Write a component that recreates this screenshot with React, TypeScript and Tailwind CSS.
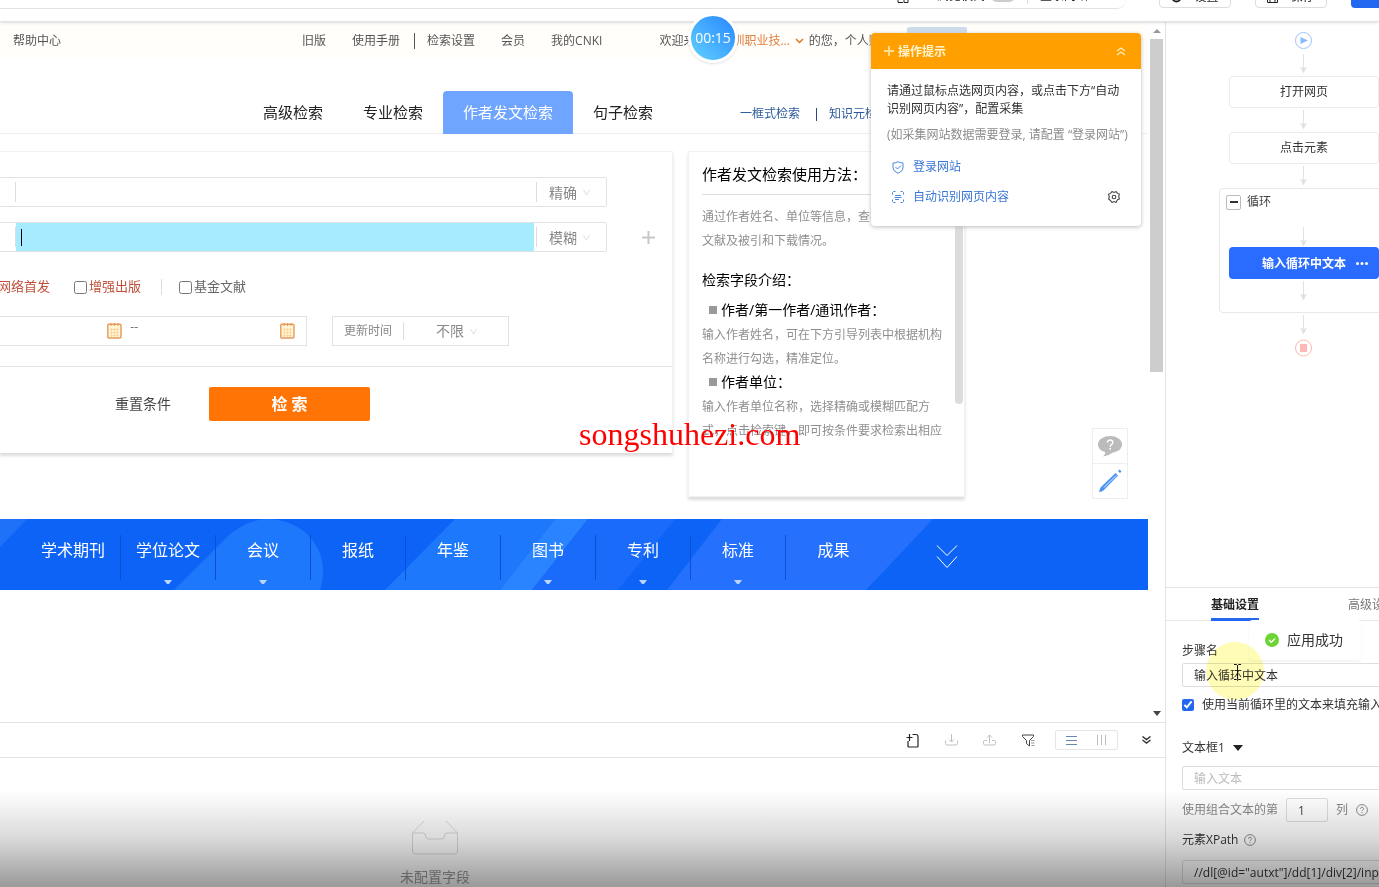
import { useState } from "react";

const FONT = "font-['Open_Sans','Noto_Sans_CJK_SC',sans-serif]";

const categories = [
    { name: "学术期刊", more: false },
    { name: "学位论文", more: true },
    { name: "会议", more: true },
    { name: "报纸", more: false },
    { name: "年鉴", more: false },
    { name: "图书", more: true },
    { name: "专利", more: true },
    { name: "标准", more: true },
    { name: "成果", more: false },
];

const tabs = ["高级检索", "专业检索", "作者发文检索", "句子检索"];

function ChevronSmall() {
    return (
        <svg width="7" height="7" viewBox="0 0 8 8" fill="none" stroke="#d8d8d8" className="pointer-events-none shrink-0">
            <path d="M.5 1 4 7 7.5 1" />
        </svg>
    );
}

function CalendarIcon() {
    return (
        <svg width="15" height="16" viewBox="0 0 15 16" fill="none" className="shrink-0">
            <rect x=".8" y="1.2" width="13.2" height="13.8" rx="1" fill="#fff4d4" stroke="#e89a58" strokeWidth="1.4" />
            <path d="M4 0v3M7.500 0v3M11 0v3" stroke="#e89a58" />
            <path d="M3 6.500h9M3 9.500h9M3 12.500h9M4.500 5v9M7.500 5v9M10.500 5v9" stroke="#fbd9a4" />
        </svg>
    );
}

function HelpIcon() {
    return (
        <svg width="12" height="12" viewBox="0 0 12 12" fill="none" stroke="#8c8c8c" className="shrink-0">
            <circle cx="6" cy="6" r="5.4" />
            <path d="M4.400 4.800c0-2.200 3.300-2 3.200 0 0 1.100-1.600 1.100-1.600 2.300M6 8.200v1" />
        </svg>
    );
}

function Arrow() {
    return (
        <svg width="8" height="20" viewBox="0 0 8 20" className="shrink-0">
            <path d="M3.500 0v14" stroke="#e2e2e2" />
            <path d="M.3 13 3.500 14l3.200-1L3.500 19.500Z" fill="#e0e0e0" />
        </svg>
    );
}

function TopToolbar() {
    return (
        <header className="relative z-10 flex h-[22px] shrink-0 items-start justify-between overflow-hidden border-b border-[#e2e3e5] bg-white text-xs text-[#222] shadow-sm">
            <div className="flex h-[9px] w-[1126px] shrink-0 items-end justify-end overflow-hidden rounded-br-2xl border-b border-[#e2e3e5] pr-[18px]">
                <svg width="12" height="12" viewBox="0 0 12 12" fill="none" stroke="#222" className="mr-7 mb-1 shrink-0">
                    <path d="M1 1v9.500h5M6 5h5v5.500H7V5" />
                </svg>
                <div className="mb-1 flex h-4 items-center">
                    <label htmlFor="browse">浏览模式</label>
                    <input id="browse" type="checkbox" className="ml-1.5 h-3 w-6 appearance-none rounded-full bg-[#ccc]" />
                    <span className="ml-3 h-4 w-px bg-[#ddd]" />
                    <button className="ml-3">登录网站</button>
                    <span className="ml-2 text-[#aaa]">∨</span>
                </div>
            </div>
            <div className="flex h-2 shrink-0 items-end gap-6">
                <button className="flex h-[22px] w-[72px] items-center justify-center gap-3 rounded border border-[#dcdde0]">
                    <svg width="11" height="11" viewBox="0 0 11 11" fill="none" stroke="#222" strokeWidth="2"><circle cx="5.500" cy="5.500" r="4" /></svg>设置
                </button>
                <button className="flex h-[22px] w-[72px] items-center justify-center gap-3 rounded border border-[#dcdde0]">
                    <svg width="11" height="11" viewBox="0 0 11 11" fill="none" stroke="#222"><path d="M.5.5h10v10H.5ZM3 10V6h5v4" /></svg>保存
                </button>
                <button aria-label="采集" className="h-[22px] w-7 rounded-l bg-[#2468f2]" />
            </div>
        </header>
    );
}

function SiteNav() {
    return (
        <nav className="flex h-9 shrink-0 items-center overflow-hidden bg-[#fffefa] pt-0.5 text-xs whitespace-nowrap text-[#555]">
            <a href="#" className="ml-[13px]">帮助中心</a>
            <a href="#" className="ml-[241px]">旧版</a>
            <a href="#" className="ml-[26px]">使用手册</a>
            <span className="mr-3 ml-3.5 h-4 w-px bg-[#555]" />
            <a href="#">检索设置</a>
            <a href="#" className="ml-[26px]">会员</a>
            <a href="#" className="ml-[26px]">我的CNKI</a>
            <span className="ml-[57px] w-[61px]">欢迎来自</span>
            <a href="#" className="text-[#e08040]">深圳职业技...</a>
            <svg width="9" height="6" viewBox="0 0 9 6" fill="none" stroke="#e07820" strokeWidth="1.5" className="mx-[5px]">
                <path d="m1 1 3.500 3.500L8 1" />
            </svg>
            <span>的您，个人账户</span>
        </nav>
    );
}

function SearchTabs() {
    const [active, setActive] = useState(2);
    return (
        <div className="flex h-[76px] shrink-0 items-end border-b border-[#f0f0f0] bg-white pl-[243px] whitespace-nowrap">
            {tabs.map((tab, i) => (
                <button
                    key={tab}
                    onClick={() => setActive(i)}
                    className={`-mb-px h-[43px] shrink-0 rounded-t text-[15px] ${i === 2 ? "w-[130px]" : "w-[100px]"} ${active === i ? "bg-[#6fa5ff] text-white" : "text-[#222]"}`}
                >
                    {tab}
                </button>
            ))}
            <div className="-mb-px ml-[67px] flex h-10 items-center text-xs text-[#2a5a9a]">
                <a href="#">一框式检索</a>
                <span className="mr-3 ml-4 h-[13px] w-px bg-[#2a4a80]" />
                <a href="#">知识元检索</a>
            </div>
        </div>
    );
}

function FieldRow({ mode, active }: { mode: string; active?: boolean }) {
    return (
        <div className="flex items-center">
            <div className="flex h-[30px] w-[607px] items-center rounded-r-xs border border-l-0 border-[#e2e2e2]">
                <span className="mr-auto ml-[15px] h-5 w-px shrink-0 bg-[#ddd]" />
                <div className={`relative flex h-7 w-[518px] items-center ${active ? "bg-[#a6ebff]" : ""}`}>
                    <input aria-label={`作者${mode}`} className="h-full w-full bg-transparent px-1.5 text-sm outline-none" />
                    {active && <span className="absolute left-[5px] h-[17px] w-px bg-black" />}
                </div>
                <span className="ml-0.5 h-5 w-px bg-[#ddd]" />
                <div className="flex w-[69px] items-center pt-px pl-3">
                    <select aria-label="匹配方式" className="w-[34px] appearance-none text-sm leading-5 text-[#888] outline-none">
                        <option>{mode}</option>
                    </select>
                    <ChevronSmall />
                </div>
            </div>
            {active && (
                <button aria-label="添加" className="ml-[35px]">
                    <svg width="13" height="13" viewBox="0 0 13 13" stroke="#c8c8c8" strokeWidth="2">
                        <path d="M6.500 0v13M0 6.500h13" />
                    </svg>
                </button>
            )}
        </div>
    );
}

function SearchCard() {
    return (
        <section className="flex h-[302px] min-w-0 flex-1 flex-col overflow-hidden border-t border-r border-[#f2f2f2] bg-white pt-[25px] whitespace-nowrap shadow-[0_3px_3px_#ddd]">
            <div className="flex flex-col gap-[15px]">
                <FieldRow mode="精确" />
                <FieldRow mode="模糊" active />
            </div>
            <div className="mt-[25px] flex h-5 items-center text-[13px] text-[#c0503c]">
                <span className="-ml-0.5 w-[52px]">网络首发</span>
                <label className="ml-6 flex items-center gap-0.5">
                    <input type="checkbox" className="size-[13px]" />增强出版
                </label>
                <span className="ml-5 h-4 w-px bg-[#ddd]" />
                <label className="ml-[17px] flex items-center gap-0.5 text-[#666]">
                    <input type="checkbox" className="size-[13px]" />基金文献
                </label>
            </div>
            <div className="mt-[19px] flex h-[30px]">
                <div className="flex w-[307px] items-center border border-l-0 border-[#e2e2e2]">
                    <input aria-label="开始日期" className="mr-auto w-[100px] outline-none" />
                    <CalendarIcon />
                    <span className="ml-2 h-5 text-xs leading-3 text-[#666]">--</span>
                    <input aria-label="结束日期" className="w-[142px] outline-none" />
                    <span className="mr-[11px]"><CalendarIcon /></span>
                </div>
                <div className="ml-[25px] flex w-[177px] items-center border border-[#e2e2e2] text-[#888]">
                    <label htmlFor="updated" className="ml-[11px] text-xs">更新时间</label>
                    <span className="ml-[11px] h-[18px] w-px bg-[#ddd]" />
                    <select id="updated" className="ml-8 w-[34px] appearance-none text-sm leading-5 outline-none">
                        <option>不限</option>
                    </select>
                    <ChevronSmall />
                </div>
            </div>
            <div className="mt-5 flex items-center border-t border-[#e2e2e2] pt-5">
                <button className="ml-[115px] text-sm text-[#444]">重置条件</button>
                <button className="ml-[38px] h-[34px] w-[161px] rounded-xs bg-[#ff7404] text-base font-bold text-white">检 索</button>
            </div>
        </section>
    );
}

function HelpCard() {
    return (
        <section className="relative h-[346px] w-[277px] shrink-0 border border-[#f2f2f2] bg-white px-[13px] pt-1.5 text-black shadow-[0_3px_3px_#ddd]">
            <h2 className="border-b border-[#ddd] pb-1 text-[15px] leading-8 whitespace-nowrap">作者发文检索使用方法：</h2>
            <div className="w-[241px] pt-2.5 text-xs leading-6 text-[#8f8f8f]">
                <p>通过作者姓名、单位等信息，查找作者发表的文献及被引和下载情况。</p>
                <h3 className="mt-[15px] text-sm leading-6 text-black">检索字段介绍：</h3>
                <h4 className="mt-1.5 flex items-center gap-1 pl-[7px] text-sm leading-6 text-black">
                    <span className="size-2 bg-[#999]" />作者/第一作者/通讯作者：
                </h4>
                <p className="pt-px">输入作者姓名，可在下方引导列表中根据机构名称进行勾选，精准定位。</p>
                <h4 className="-mt-px flex items-center gap-1 pl-[7px] text-sm leading-6 text-black">
                    <span className="size-2 bg-[#999]" />作者单位：
                </h4>
                <p className="pt-px">输入作者单位名称，选择精确或模糊匹配方式，点击检索键，即可按条件要求检索出相应</p>
            </div>
            <span className="absolute top-12 right-px h-[204px] w-2 rounded-full bg-[#dcdcdc]" />
        </section>
    );
}

function CategoryBar() {
    return (
        <div className="relative mt-[22px] h-[71px] shrink-0 overflow-hidden bg-[#0d63f6]">
            <svg width="1148" height="71" viewBox="0 0 1148 71" className="absolute inset-0">
                <path d="M0 0h27L0 28Z" fill="#1f72f8" />
                <path d="M174 71 228 17Q248 0 267 0C300 0 323 24 323 52Q323 63 320 71Z" fill="#1d78fc" />
                <path d="M385 71 455 0H555L500 71Z" fill="#1d78fc" />
                <path d="M500 71 555 0h33L532 71Z" fill="#2b84ff" />
                <path d="M532 71 588 0h87L618 71Z" fill="#1b6bfa" />
                <path d="M667 71 722 0H933L789 71Z" fill="#2571fd" />
                <path d="M712 71 780 0h153L866 71Z" fill="#2571fd" />
            </svg>
            <ul className="relative flex h-full pl-[26px] text-base text-white">
                {categories.map((c) => (
                    <li key={c.name} className="flex w-[95px] shrink-0">
                        <a href="#" className="flex h-full flex-1 flex-col items-center pt-[19px]">
                            <span className="leading-6">{c.name}</span>
                            {c.more && <svg width="8" height="4" viewBox="0 0 8 4" className="mt-[18px]"><path d="M0 0h8L5 4H3Z" fill="#b8d4ff" /></svg>}
                        </a>
                        {c.name !== "成果" && <span className="mt-4 h-[45px] w-px bg-[#0850d4]" />}
                    </li>
                ))}
                <li className="ml-[55px] pt-[26px]">
                    <button aria-label="展开">
                        <svg width="22" height="24" viewBox="0 0 22 24" fill="none" stroke="#fff">
                            <path d="m1 .5 10 10 10-10M1 11.500l10 11 10-11" />
                        </svg>
                    </button>
                </li>
            </ul>
        </div>
    );
}

function TipPanel() {
    return (
        <aside className="absolute top-[11px] right-[24px] w-[270px] rounded-sm bg-white text-xs shadow-[0_1px_4px_#bbb]">
            <div className="flex h-9 items-center rounded-t-sm bg-[#ffa000] px-[13px] text-[#fff3d0]">
                <svg width="10" height="10" viewBox="0 0 10 10" stroke="#ffdc90" strokeWidth="2">
                    <path d="M5 0v10M0 5h10" />
                </svg>
                <h2 className="ml-1 pt-0.5 font-bold">操作提示</h2>
                <button aria-label="收起" className="ml-auto p-0.5">
                    <svg width="10" height="9" viewBox="0 0 10 9" fill="none" stroke="#ffeec0" strokeWidth="1.2">
                        <path d="m1 4 4-3 4 3M1 8l4-3 4 3" />
                    </svg>
                </button>
            </div>
            <div className="h-[157px] px-4 pt-[13px]">
                <p className="leading-[18px] whitespace-nowrap text-[#333]">请通过鼠标点选网页内容，或点击下方“自动<br />识别网页内容”，配置采集</p>
                <p className="mt-2 leading-[18px] whitespace-nowrap text-[#8c8c8c]">(如采集网站数据需要登录, 请配置 “登录网站”)</p>
                <button className="mt-3.5 ml-[5px] flex h-[18px] items-center gap-[9px] text-[#3a76d8]">
                    <svg width="12" height="13" viewBox="0 0 12 13" fill="none" stroke="#4a88e0">
                        <path d="M6 .7Q8 2 11 2v5q0 3-5 5.300Q1 10 1 7V2Q4 2 6 .7ZM3.500 6l2 2 3.500-3.500" />
                    </svg>
                    登录网站
                </button>
                <div className="mt-3 ml-[5px] flex h-[18px] items-center justify-between pr-[5px]">
                    <button className="flex items-center gap-[9px] text-[#3a76d8]">
                        <svg width="12" height="12" viewBox="0 0 12 12" fill="none" stroke="#4a88e0">
                            <path d="M.5 3.500v-2l1-1h2M8.500.5h2l1 1v2M.5 8.500v2l1 1h2M8.500 11.500h2l1-1v-2" />
                            <path d="M3 4.500h6M2.500 6.500h7M3 8.500h4" />
                        </svg>
                        自动识别网页内容
                    </button>
                    <button aria-label="设置">
                        <svg width="12" height="12" viewBox="0 0 12 12" fill="none" stroke="#444" strokeWidth="1.1">
                            <path d="m4 .6 2 .8 2-.8 1.500 1.800 1.900.7-.7 2 .7 2.900-1.900.8L8 11.400l-2-.8-2 .8-1.500-1.800L.6 8l.7-2-.7-2.900 1.900-.7Z" />
                            <circle cx="6" cy="6" r="1.800" />
                        </svg>
                    </button>
                </div>
            </div>
        </aside>
    );
}

function FloatTools() {
    return (
        <div className="absolute top-[406px] right-[37px] flex w-9 flex-col divide-y divide-[#eee] border border-[#eee] bg-white">
            <button aria-label="帮助" className="flex h-[35px] items-center justify-center">
                <svg width="24" height="21" viewBox="0 0 24 21">
                    <ellipse cx="12" cy="8.500" rx="12" ry="8.500" fill="#bbb" />
                    <path d="M7 14q1 4-2 6.500 7-1.500 10-4.500Z" fill="#bbb" />
                    <path d="M9.500 6.500c0-3.500 5.500-3.300 5.300 0 0 2-2.600 2-2.600 4.200M12.200 12v1.700" stroke="#fff" strokeWidth="1.500" fill="none" />
                </svg>
            </button>
            <button aria-label="编辑" className="flex h-[34px] items-center justify-center">
                <svg width="24" height="24" viewBox="0 0 24 24">
                    <path d="M1 23q.5-3 2-5L17.500 4l2.500 2.500L6 21q-2 2-5 2Z" fill="#4a94f0" />
                    <path d="m6 18.500 12-12" stroke="#d8ebff" />
                    <path d="m20 2 1.500-1.500 2 2L22 4Z" fill="#4a94f0" />
                </svg>
            </button>
        </div>
    );
}

function Scrollbar() {
    return (
        <div className="flex w-[17px] shrink-0 flex-col items-center bg-white pt-[7px] pb-1.5">
            <svg width="8" height="4" viewBox="0 0 8 4"><path d="M0 4h8L4 0Z" fill="#999" /></svg>
            <span className="mt-1.5 h-[333px] w-[13px] bg-[#cdcdcd]" />
            <svg width="8" height="5" viewBox="0 0 8 5" className="mt-auto"><path d="M0 0h8L4 5Z" fill="#444" /></svg>
        </div>
    );
}

function DataPanel() {
    return (
        <>
            <div className="flex h-9 shrink-0 items-center justify-end border-y border-[#e4e4e4] bg-white pr-3.5">
                <button aria-label="添加字段">
                    <svg width="13" height="15" viewBox="0 0 13 15" fill="none" stroke="#222" strokeWidth="1.200">
                        <path d="M6.500 1.500h3.500q2 0 2 2v9.500q0 1-1 1H3q-1 0-1-1V8M.5 4.500h6M3.500 1v7" />
                    </svg>
                </button>
                <button aria-label="导入" className="ml-[26px]">
                    <svg width="13" height="12" viewBox="0 0 13 12" fill="none" stroke="#c0c0c0">
                        <path d="M.5 6.500v3q0 1.500 1.500 1.500h9q1.500 0 1.500-1.500v-3M6.500 0v8M4 5.500 6.500 8 9 5.500" />
                    </svg>
                </button>
                <button aria-label="导出" className="ml-[25px]">
                    <svg width="13" height="12" viewBox="0 0 13 12" fill="none" stroke="#c0c0c0">
                        <path d="M4 6.500H1.500q-1 0-1 1v2q0 1.500 1.500 1.500h9q1.500 0 1.500-1.500v-2q0-1-1-1H9M6.500 9V1M4 3.500 6.500 1 9 3.500" />
                    </svg>
                </button>
                <button aria-label="筛选" className="ml-[26px]">
                    <svg width="13" height="13" viewBox="0 0 13 13" fill="none" stroke="#444">
                        <path d="M.5 1h11v1.500L7.500 6.500V12L4.500 9.500v-3L.5 2.500Z" />
                        <path d="M9 6.500h3.500M9 9h3.500M9.500 11.500h3" stroke="#999" />
                    </svg>
                </button>
                <div className="ml-5 flex h-5 w-[63px] items-center justify-around rounded-xs border border-[#e6e6e6]">
                    <button aria-label="列表视图">
                        <svg width="11" height="9" viewBox="0 0 11 9" stroke="#6886b4"><path d="M0 .5h11M0 4.500h11M0 8.500h11" /></svg>
                    </button>
                    <button aria-label="分栏视图">
                        <svg width="10" height="10" viewBox="0 0 10 10" stroke="#bbb"><path d="M.5 0v10M4.500 0v10M8.500 0v10" /></svg>
                    </button>
                </div>
                <button aria-label="收起面板" className="ml-6">
                    <svg width="9" height="8" viewBox="0 0 9 8" fill="none" stroke="#333" strokeWidth="1.400">
                        <path d="m.5.5 4 3 4-3M.5 4l4 3 4-3" />
                    </svg>
                </button>
            </div>
            <div className="flex h-[129px] shrink-0 flex-col bg-white pt-[62px]">
                <div className="flex w-[870px] flex-col items-center text-[#999]">
                    <svg width="46" height="35" viewBox="0 0 46 35" fill="none" stroke="#dadada">
                        <path d="M12 1 .5 13M34 1l11.500 12M.5 13h11q2 0 2 3 0 3 3 3h13q3 0 3-3 0-3 2-3h11v18q0 3-3 3h-39q-3 0-3-3Z" />
                    </svg>
                    <p className="mt-3 text-sm leading-5">未配置字段</p>
                </div>
            </div>
        </>
    );
}

function FlowNode({ children }: { children: string }) {
    return (
        <button className="my-0.5 h-8 w-[150px] shrink-0 rounded border border-[#ececec] bg-white text-xs text-[#333]">{children}</button>
    );
}

function FlowChart() {
    return (
        <div className="flex-1 overflow-hidden">
            <div className="ml-[53px] flex w-[170px] flex-col items-center pt-2.5">
                <svg width="18" height="18" viewBox="0 0 18 18" className="mb-1">
                    <circle cx="8.500" cy="8.500" r="8" fill="none" stroke="#9cc2fa" />
                    <path d="M5.500 5 13 8.500 5.500 12Z" fill="#8abaff" />
                </svg>
                <Arrow />
                <FlowNode>打开网页</FlowNode>
                <Arrow />
                <FlowNode>点击元素</FlowNode>
                <Arrow />
                <div className="my-0.5 flex h-[125px] w-full flex-col items-center rounded border border-[#e8e8e8] pt-[5px]">
                    <div className="flex w-full items-center pl-1.5 text-xs text-[#444]">
                        <button aria-label="折叠" className="mr-1.5 flex size-[15px] items-center justify-center rounded-xs border border-[#bbb]">
                            <span className="h-0.5 w-2 bg-[#333]" />
                        </button>
                        循环
                    </div>
                    <div className="mt-[17px]">
                        <Arrow />
                    </div>
                    <button className="mb-0.5 flex h-8 w-[150px] shrink-0 items-center justify-end rounded bg-[#2a6cff] pt-px pr-[11px] text-xs font-bold text-white">
                        输入循环中文本
                        <svg width="12" height="3" viewBox="0 0 12 3" fill="#fff" className="ml-2.5">
                            <circle cx="1.500" cy="1.500" r="1.500" /><circle cx="6" cy="1.500" r="1.500" /><circle cx="10.500" cy="1.500" r="1.500" />
                        </svg>
                    </button>
                    <Arrow />
                </div>
                <Arrow />
                <svg width="18" height="18" viewBox="0 0 18 18" className="mt-1">
                    <circle cx="8.500" cy="9" r="8" fill="none" stroke="#f6bcb0" />
                    <path d="M5 5h7v8H5Z" fill="#ffb8b8" />
                </svg>
            </div>
        </div>
    );
}

function Settings() {
    const [name, setName] = useState("输入循环中文本");
    return (
        <div className="relative h-[300px] shrink-0 overflow-hidden border-t border-[#e4e4e4] text-xs text-[#333]">
            <div className="flex h-[33px] items-stretch border-b border-[#e8e8e8] pl-[45px] whitespace-nowrap">
                <button className="h-[33px] shrink-0 border-b-[3px] border-[#2468f2] pt-[3px] font-bold text-[#222]">基础设置</button>
                <button className="ml-[89px] shrink-0 pt-0.5 text-[#777]">高级设置</button>
            </div>
            <div className="w-[240px] pl-4 whitespace-nowrap">
                <label htmlFor="step" className="mt-[21px] block leading-[18px]">步骤名</label>
                <input id="step" value={name} onChange={(e) => setName(e.target.value)} className="mt-[3px] h-6 w-full rounded-xs border border-[#ddd] px-[11px]" />
                <label className="mt-2 flex h-5 items-center gap-2">
                    <input type="checkbox" defaultChecked className="size-3 accent-[#2468f2]" />使用当前循环里的文本来填充输入框
                </label>
                <button className="mt-[23px] flex h-5 items-center gap-2">
                    文本框1
                    <svg width="10" height="6" viewBox="0 0 10 6"><path d="M0 0h10L5 6Z" fill="#222" /></svg>
                </button>
                <input aria-label="输入文本" placeholder="输入文本" className="mt-2 h-6 w-full rounded-xs border border-[#ddd] px-[11px] placeholder:text-[#bbb]" />
                <div className="mt-2 flex items-center text-[#888]">
                    <label htmlFor="col">使用组合文本的第</label>
                    <input id="col" defaultValue="1" className="mr-2 ml-2 h-6 w-[42px] rounded-xs border border-[#ddd] px-[11px] text-[#444]" />
                    列<span className="ml-2"><HelpIcon /></span>
                </div>
                <div className="mt-2 flex h-5 items-center gap-1.5">
                    <label htmlFor="xpath">元素XPath</label>
                    <HelpIcon />
                </div>
                <input id="xpath" defaultValue={'//dl[@id="autxt"]/dd[1]/div[2]/input'} className="mt-[10px] h-6 w-full rounded-xs border border-[#ddd] px-[11px]" />
            </div>

            <div role="status" className="absolute top-8 left-[83px] flex h-10 w-[112px] items-center gap-2 rounded-sm bg-white pl-4 text-sm whitespace-nowrap text-[#333] shadow-[0_2px_3px_#f4f4f4]">
                <svg width="14" height="14" viewBox="0 0 14 14" fill="none">
                    <circle cx="7" cy="7" r="7" fill="#6cd534" />
                    <path d="m4 7 2.300 2.300L10 5.500" stroke="#fff" strokeWidth="1.300" />
                </svg>
                应用成功
            </div>
            <span className="pointer-events-none absolute top-[54px] left-10 size-[58px] rounded-full bg-[#fffcb8] mix-blend-multiply" />
            <svg width="7" height="16" viewBox="0 0 7 16" fill="none" stroke="#111" className="pointer-events-none absolute top-[76px] left-[68px]">
                <path d="M0 .5h2.500l1 1 1-1H7M3.500 1v14M0 15.500h2.500l1-1 1 1H7" />
            </svg>
        </div>
    );
}

export default function App() {
    return (
        <div className={`relative flex h-screen flex-col overflow-hidden bg-white ${FONT}`}>
            <TopToolbar />
            <div className="flex min-h-0 flex-1">
                <main className="flex min-w-0 flex-1 flex-col">
                    <div className="relative flex min-h-0 flex-1 overflow-hidden">
                        <div className="flex min-w-0 flex-1 flex-col overflow-hidden">
                            <SiteNav />
                            <SearchTabs />
                            <div className="mt-[17px] flex shrink-0 items-start gap-[15px] pr-[183px]">
                                <SearchCard />
                                <HelpCard />
                            </div>
                            <CategoryBar />
                        </div>
                        <Scrollbar />
                        <span className="absolute top-[5px] right-[198px] h-2 w-[60px] rounded-t-xs bg-[#ccdcea]" />
                        <TipPanel />
                        <FloatTools />
                    </div>
                    <DataPanel />
                </main>
                <aside className="flex w-[214px] shrink-0 flex-col overflow-hidden border-l border-[#e4e4e4] bg-white">
                    <FlowChart />
                    <Settings />
                </aside>
            </div>

            <div className="absolute top-[13px] left-[688px] z-20 flex size-[50px] items-center justify-center rounded-full border-[3px] border-white bg-linear-to-tr from-[#62d0ff] to-[#2a86ff] text-sm text-white shadow-sm">
                00:15
            </div>
            <p className="pointer-events-none absolute top-[414px] left-[579px] font-['Liberation_Serif',serif] text-[32px] leading-10 text-[#f00]">songshuhezi.com</p>
            <div className="pointer-events-none absolute inset-x-0 bottom-0 h-24 bg-linear-to-t from-black/40 via-black/15 to-transparent" />
        </div>
    );
}
